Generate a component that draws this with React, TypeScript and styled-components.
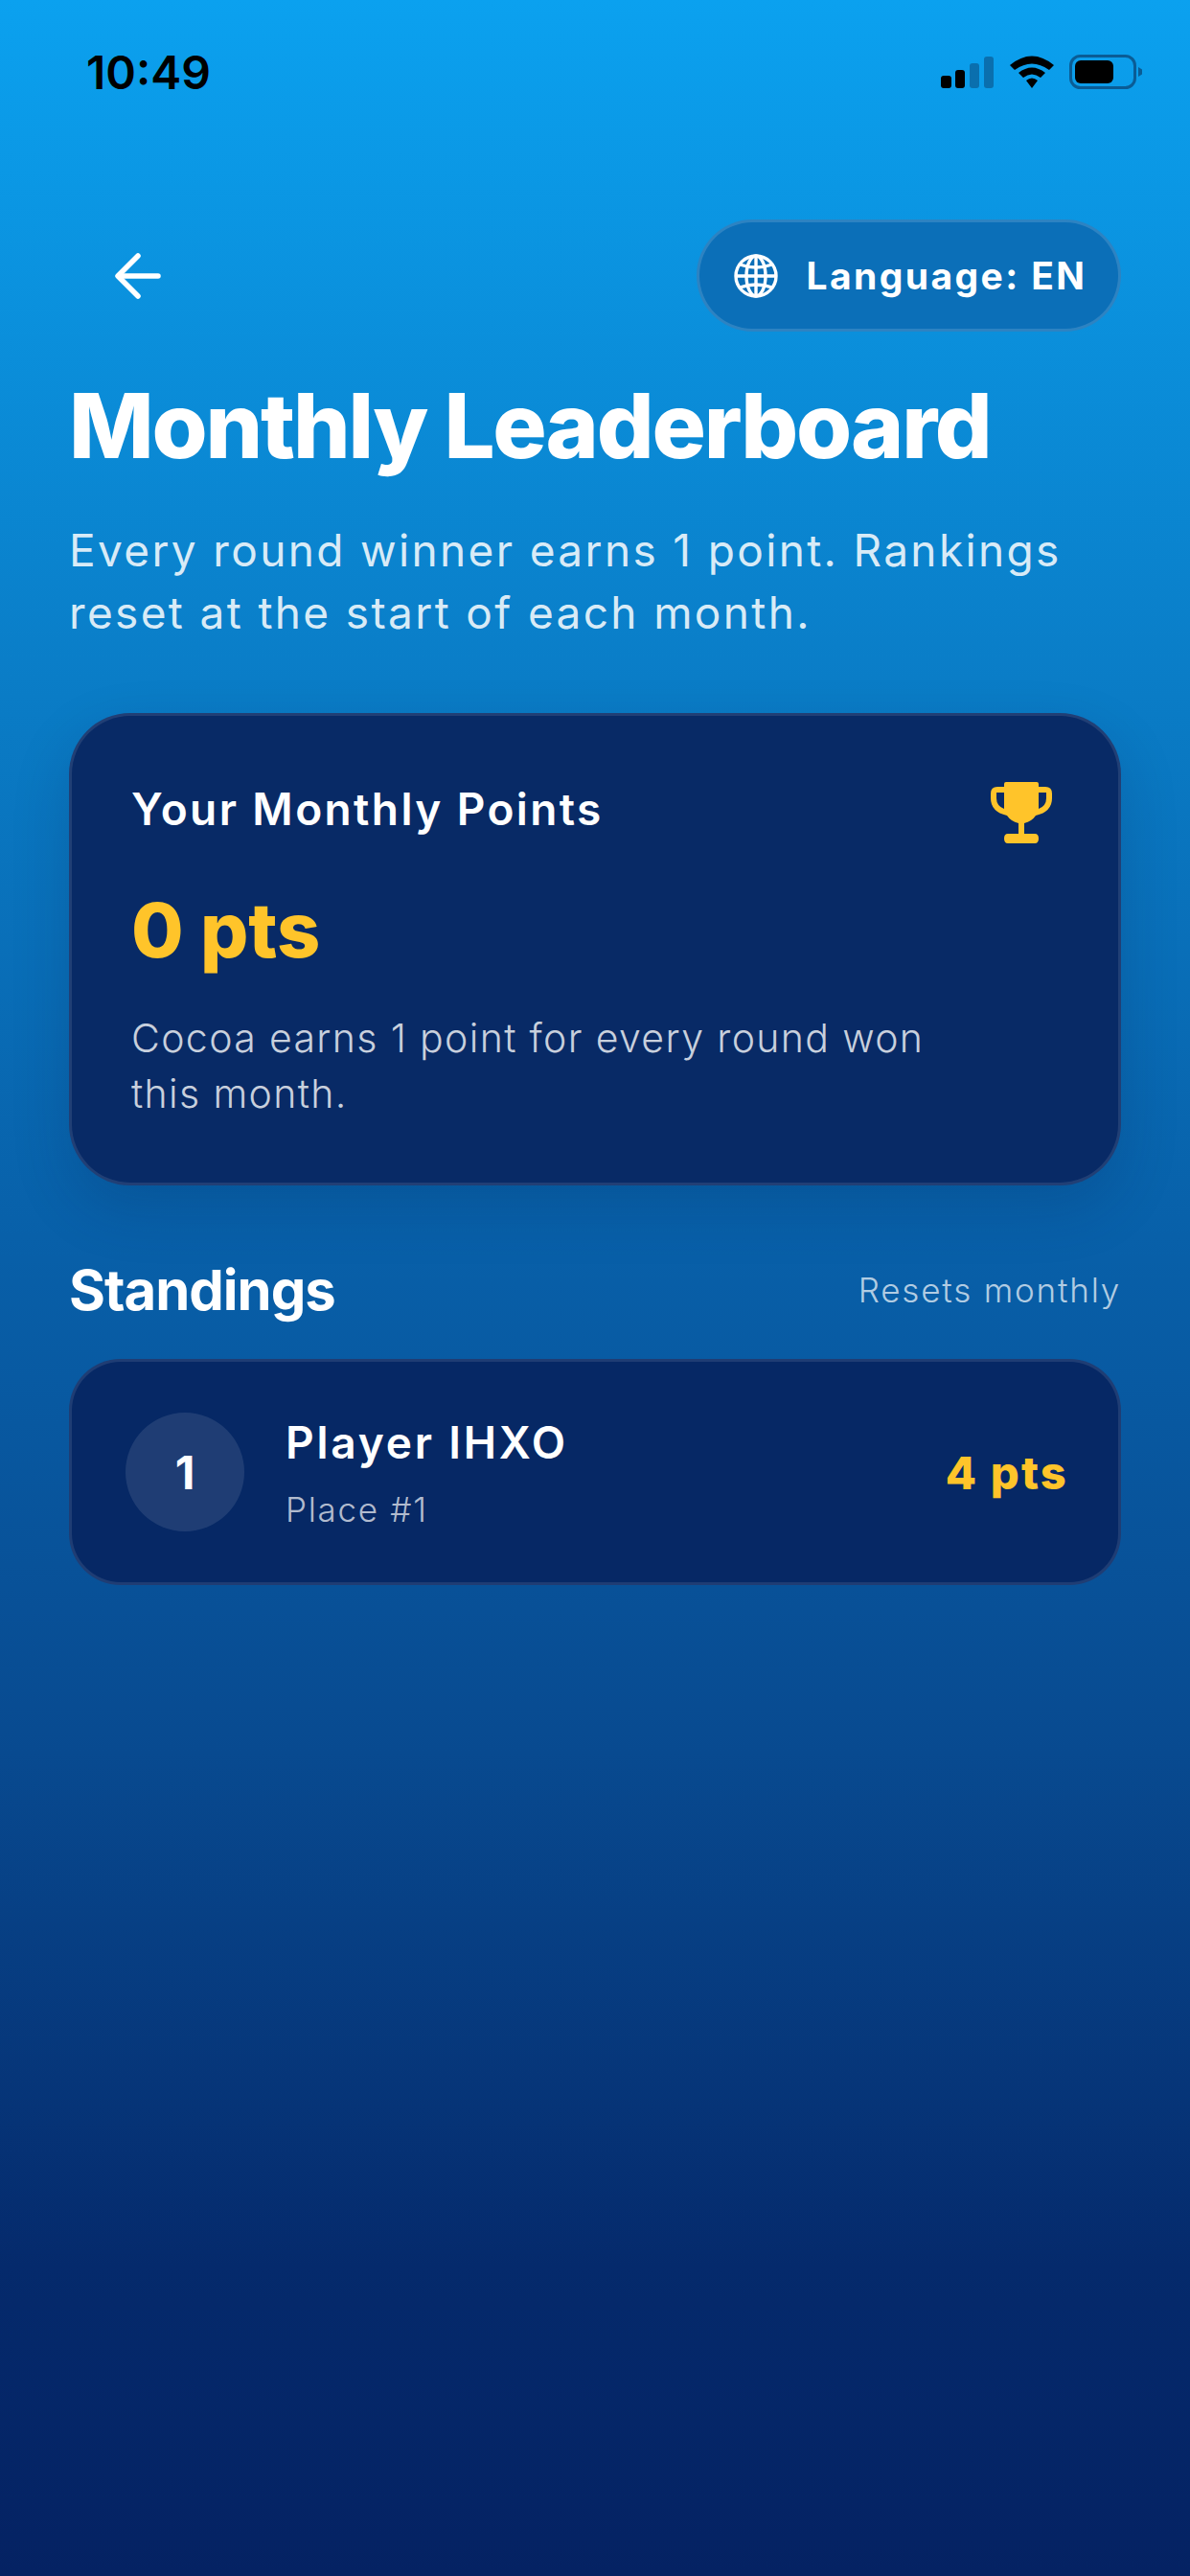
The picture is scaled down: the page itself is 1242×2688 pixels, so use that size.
import React from 'react';
import styled, { createGlobalStyle } from 'styled-components';

const GlobalStyle = createGlobalStyle`
  html, body {
    margin: 0;
    padding: 0;
  }

  body {
    font-family: Inter, "Noto Sans", sans-serif;
    -webkit-font-smoothing: antialiased;
  }
`;

const SignalBars: React.FC = () => (
  <svg width="56" height="34" viewBox="0 0 56 34">
    <rect x="0" y="21" width="11" height="13" rx="3" fill="#000" />
    <rect x="15" y="15" width="10" height="19" rx="3" fill="#000" />
    <rect x="30" y="8" width="10" height="26" rx="3" fill="#0a6fae" />
    <rect x="45" y="1" width="10" height="33" rx="3" fill="#0a6fae" />
  </svg>
);

const WifiGlyph: React.FC = () => (
  <svg width="48" height="36" viewBox="0 0 48 36">
    <path d="M1 11 Q24 -8 47 11 L42 16 Q24 3 6 16 Z" fill="#000" />
    <path d="M10 19 Q24 8 38 19 L33 24 Q24 17 15 24 Z" fill="#000" />
    <path d="M18 27 Q24 22 30 27 L24 35 Z" fill="#000" />
  </svg>
);

const BatteryGlyph: React.FC = () => (
  <svg width="76" height="36" viewBox="0 0 76 36">
    <rect x="1.5" y="1.5" width="67" height="33" rx="10" fill="none" stroke="#0a5c95" strokeWidth="3" />
    <rect x="6" y="6" width="40" height="24" rx="6" fill="#000" />
    <path d="M72 13 L76 15.5 V20.5 L72 23 Z" fill="#0a5c95" />
  </svg>
);

const BackArrow: React.FC = () => (
  <svg width="52" height="52" viewBox="0 0 52 52" fill="none" stroke="#fff" strokeWidth="5.5" strokeLinecap="round" strokeLinejoin="round">
    <path d="M47 26 H6" />
    <path d="M26 5 L5 26 L26 47" />
  </svg>
);

const GlobeGlyph: React.FC = () => (
  <svg width="46" height="46" viewBox="0 0 46 46" fill="none" stroke="#fff" strokeWidth="3.4">
    <circle cx="23" cy="23" r="21" />
    <ellipse cx="23" cy="23" rx="10" ry="21" />
    <path d="M23 2 V44" />
    <path d="M2 23 H44" />
    <path d="M6 11 Q23 17 40 11" />
    <path d="M6 35 Q23 29 40 35" />
  </svg>
);

const TrophyGlyph: React.FC = () => (
  <svg width="64" height="64" viewBox="0 0 64 64">
    <path
      fill="#ffc42a"
      fillRule="evenodd"
      d="M16 0 H48 Q50 0 50 2 V5 H57 Q64 5 64 12 V17 Q64 31 47 35 Q43 41 35 43 V54 H46 Q50 54 50 59 Q50 64 46 64 H18 Q14 64 14 59 Q14 54 18 54 H29 V43 Q21 41 17 35 Q0 31 0 17 V12 Q0 5 7 5 H14 V2 Q14 0 16 0 Z M6 11 V17 Q6 25 14 28 V11 Z M58 11 H50 V28 Q58 25 58 17 Z"
    />
  </svg>
);

const App: React.FC = () => {
  return (
    <Screen>
      <GlobalStyle />
      <StatusBar>
        <Clock>10:49</Clock>
        <StatusIcons>
          <SignalBars />
          <WifiGlyph />
          <BatteryGlyph />
        </StatusIcons>
      </StatusBar>
      <Content>
        <TopRow>
          <BackButton>
            <BackArrow />
          </BackButton>
          <LanguagePill>
            <GlobeGlyph />
            Language: EN
          </LanguagePill>
        </TopRow>
        <Title>Monthly Leaderboard</Title>
        <Subtitle>Every round winner earns 1 point. Rankings reset at the start of each month.</Subtitle>
        <PointsCard>
          <PointsHeader>
            <PointsLabel>Your Monthly Points</PointsLabel>
            <TrophyGlyph />
          </PointsHeader>
          <PointsValue>0 pts</PointsValue>
          <PointsNote>Cocoa earns 1 point for every round won this month.</PointsNote>
        </PointsCard>
        <SectionHeader>
          <SectionTitle>Standings</SectionTitle>
          <SectionHint>Resets monthly</SectionHint>
        </SectionHeader>
        <StandingRow>
          <RankBadge>1</RankBadge>
          <PlayerInfo>
            <PlayerName>Player IHXO</PlayerName>
            <PlayerPlace>Place #1</PlayerPlace>
          </PlayerInfo>
          <PlayerPoints>4 pts</PlayerPoints>
        </StandingRow>
      </Content>
    </Screen>
  );
};

const Screen = styled.div`
  width: 1242px;
  height: 2688px;
  overflow: hidden;
  background: linear-gradient(180deg, #0ba1ef 0%, #0a7cc6 27%, #0860a9 48%, #084a90 68%, #052a6c 88%, #052263 100%);
`;

const StatusBar = styled.div`
  height: 150px;
  padding: 0 50px 0 90px;
  box-sizing: border-box;
  display: flex;
  justify-content: space-between;
  align-items: center;
`;

const Clock = styled.div`
  font-family: Inter, sans-serif;
  font-weight: 600;
  font-size: 48px;
  color: #000;
`;

const StatusIcons = styled.div`
  display: flex;
  align-items: center;
  gap: 15px;
`;

const Content = styled.div`
  padding: 79px 72px 0;
`;

const TopRow = styled.div`
  display: flex;
  justify-content: space-between;
  align-items: center;
`;

const BackButton = styled.div`
  width: 72px;
  height: 72px;
  margin-left: 36px;
  display: flex;
  align-items: center;
  justify-content: center;
`;

const LanguagePill = styled.div`
  height: 117px;
  width: 443px;
  box-sizing: border-box;
  border-radius: 59px;
  padding-left: 3px;
  border: 3px solid rgba(255, 255, 255, 0.14);
  background: #0b6fb8;
  display: flex;
  align-items: center;
  justify-content: center;
  gap: 30px;
  color: #fff;
  font-weight: 700;
  font-size: 39px;
  letter-spacing: 2.4px;
`;

const Title = styled.h1`
  margin: 42px 0 0;
  color: #fff;
  font-weight: 800;
  font-size: 94px;
  line-height: 112px;
  letter-spacing: -2.2px;
`;

const Subtitle = styled.p`
  margin: 42px 0 0;
  color: rgba(255, 255, 255, 0.85);
  font-weight: 400;
  font-size: 46px;
  line-height: 65px;
  letter-spacing: 2.35px;
`;

const PointsCard = styled.div`
  margin-top: 72px;
  height: 493px;
  box-sizing: border-box;
  padding: 69px 69px 0 62px;
  background: #082a66;
  border: 3px solid rgba(255, 255, 255, 0.1);
  border-radius: 64px;
  box-shadow: 0 24px 60px rgba(3, 25, 70, 0.18);
`;

const PointsHeader = styled.div`
  display: flex;
  justify-content: space-between;
  align-items: flex-start;
`;

const PointsLabel = styled.div`
  color: #fff;
  font-weight: 600;
  font-size: 46px;
  line-height: 56px;
  letter-spacing: 2.4px;
`;

const PointsValue = styled.div`
  margin-top: 40px;
  color: #ffc42a;
  font-weight: 800;
  font-size: 79px;
  line-height: 100px;
`;

const PointsNote = styled.div`
  margin-top: 34px;
  width: 860px;
  color: rgba(255, 255, 255, 0.78);
  font-weight: 300;
  font-size: 41px;
  line-height: 58px;
  letter-spacing: 1.35px;
`;

const SectionHeader = styled.div`
  margin-top: 75px;
  display: flex;
  justify-content: space-between;
  align-items: center;
`;

const SectionTitle = styled.h2`
  margin: 0;
  color: #fff;
  font-weight: 700;
  font-size: 58px;
  line-height: 68px;
  letter-spacing: -1px;
`;

const SectionHint = styled.div`
  color: rgba(255, 255, 255, 0.7);
  font-weight: 300;
  font-size: 35px;
  letter-spacing: 1.8px;
`;

const StandingRow = styled.div`
  margin-top: 38px;
  height: 236px;
  box-sizing: border-box;
  padding: 0 52px 0 56px;
  display: flex;
  align-items: center;
  background: #062865;
  border: 3px solid rgba(255, 255, 255, 0.1);
  border-radius: 54px;
`;

const RankBadge = styled.div`
  width: 124px;
  height: 124px;
  border-radius: 50%;
  background: rgba(255, 255, 255, 0.1);
  color: #fff;
  font-weight: 700;
  font-size: 48px;
  display: flex;
  align-items: center;
  justify-content: center;
`;

const PlayerInfo = styled.div`
  margin-left: 43px;
  flex: 1;
`;

const PlayerName = styled.div`
  color: #fff;
  font-weight: 600;
  font-size: 46px;
  line-height: 58px;
  letter-spacing: 2.8px;
`;

const PlayerPlace = styled.div`
  margin-top: 19px;
  color: rgba(255, 255, 255, 0.7);
  font-weight: 300;
  font-size: 35px;
  line-height: 44px;
  letter-spacing: 1.7px;
`;

const PlayerPoints = styled.div`
  color: #ffc42a;
  font-weight: 800;
  font-size: 47px;
  letter-spacing: 2.2px;
`;

export default App;
